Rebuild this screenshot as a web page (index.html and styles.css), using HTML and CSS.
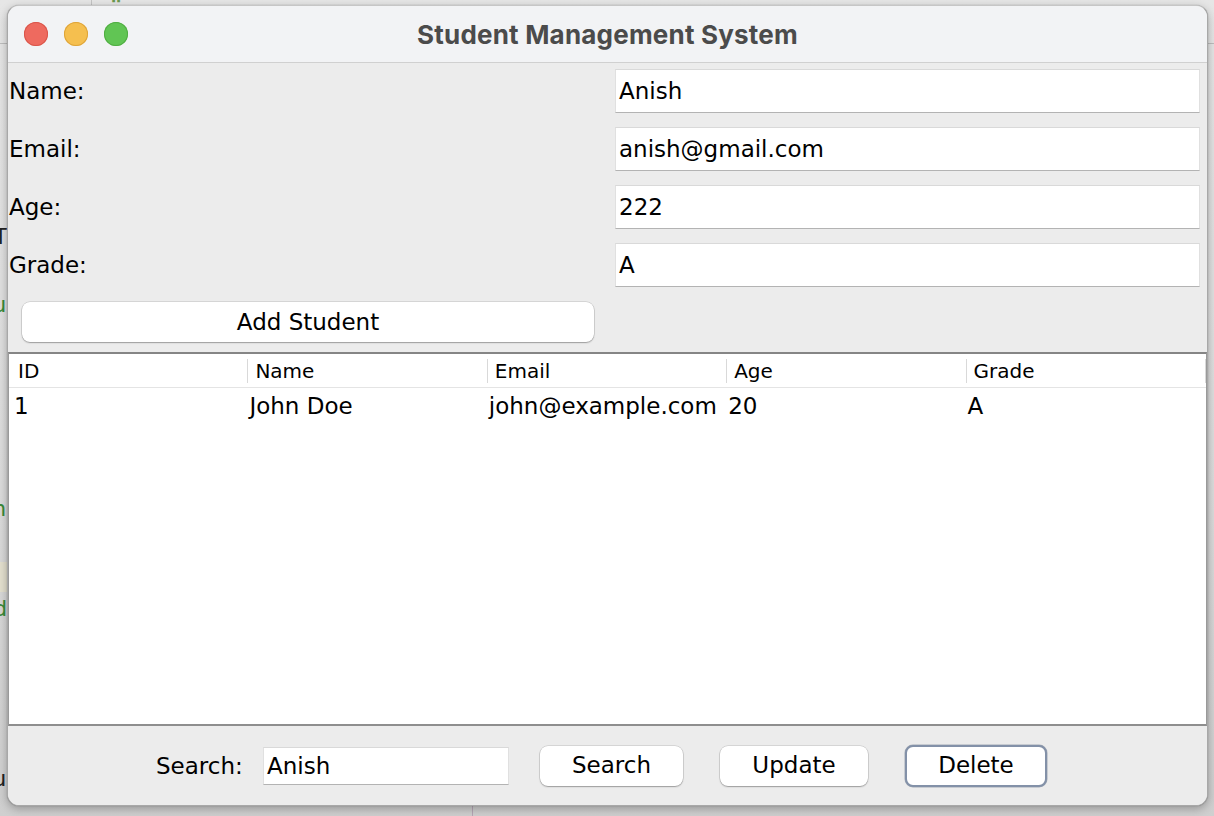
FILE: index.html
```html
<!DOCTYPE html>
<html lang="en">
<head>
<meta charset="utf-8">
<title>Student Management System</title>
<link rel="stylesheet" href="styles.css">
</head>
<body>
<div class="desktop">
  <div class="bg-hline"></div>
  <div class="bg-vline"></div>
  <div class="bg-vline2"></div>
  <div class="bg-hilite"></div>
  <span class="bg-glyph g-quote">“</span>
  <span class="bg-glyph g-t">T</span>
  <span class="bg-glyph g-u green">u</span>
  <span class="bg-glyph g-n green">n</span>
  <span class="bg-glyph g-d green">d</span>
  <span class="bg-glyph g-u2">u</span>

  <div class="window">
    <div class="titlebar">
      <div class="lights">
        <span class="light red"></span>
        <span class="light yellow"></span>
        <span class="light green"></span>
      </div>
      <div class="title">Student Management System</div>
      <div></div>
    </div>

    <div class="form">
      <div class="label">Name:</div>
      <div class="field">Anish</div>
      <div class="label">Email:</div>
      <div class="field">anish@gmail.com</div>
      <div class="label">Age:</div>
      <div class="field">222</div>
      <div class="label">Grade:</div>
      <div class="field">A</div>
      <div class="btn add-btn">Add Student</div>
      <div></div>
    </div>

    <div class="table-pane">
      <div class="thead">
        <div class="th first">ID</div>
        <div class="th">Name</div>
        <div class="th">Email</div>
        <div class="th">Age</div>
        <div class="th">Grade</div>
      </div>
      <div class="tr">
        <div class="td first">1</div>
        <div class="td">John Doe</div>
        <div class="td">john@example.com</div>
        <div class="td">20</div>
        <div class="td">A</div>
      </div>
    </div>

    <div class="bottom">
      <div class="search-label">Search:</div>
      <div class="field search-field">Anish</div>
      <div class="btn small-btn search-btn">Search</div>
      <div class="btn small-btn update-btn">Update</div>
      <div class="btn small-btn delete-btn">Delete</div>
    </div>
  </div>
</div>
</body>
</html>
```

FILE: styles.css
```css
* { box-sizing: border-box; }

html, body {
  margin: 0;
  padding: 0;
  width: 1214px;
  height: 816px;
  overflow: hidden;
  font-family: "DejaVu Sans", "Liberation Sans", sans-serif;
}

.desktop {
  position: relative;
  width: 1214px;
  height: 816px;
  background: linear-gradient(#e6e6e6, #dcdcdc 60%, #cfcfcf);
}

.bg-hline {
  position: absolute;
  left: 0; right: 0; top: 43px;
  height: 1px;
  background: #bdbdbd;
}
.bg-vline {
  position: absolute;
  left: 91px; top: 0;
  width: 1px; height: 10px;
  background: #c4c4c4;
}
.bg-vline2 {
  position: absolute;
  left: 472px; bottom: 0;
  width: 1px; height: 14px;
  background: #b6a7b6;
}
.bg-hilite {
  position: absolute;
  left: 0; top: 562px;
  width: 10px; height: 30px;
  background: #e4e0cf;
}
.bg-glyph {
  position: absolute;
  font-family: "DejaVu Sans Mono", monospace;
  font-size: 22px;
  line-height: 1;
  color: #222;
}
.bg-glyph.green { color: #3a8a3a; }
.g-quote { left: 110px; top: -6px; color: #6a9a50; }
.g-t { left: -6px; top: 226px; }
.g-u { left: -7px; top: 294px; }
.g-n { left: -7px; top: 498px; }
.g-d { left: -6px; top: 598px; }
.g-u2 { left: -7px; top: 768px; }

/* ---------- window ---------- */
.window {
  position: absolute;
  left: 7px;
  top: 5px;
  width: 1201px;
  height: 801px;
  border: 1px solid #a8a8a8;
  border-top-color: #c6c6c6;
  border-radius: 12px;
  overflow: hidden;
  background: #ececec;
  display: flex;
  flex-direction: column;
  box-shadow: 0 3px 10px rgba(0, 0, 0, 0.28), 0 0 1px rgba(0, 0, 0, 0.4);
}

.titlebar {
  flex: 0 0 57px;
  display: grid;
  grid-template-columns: 1fr auto 1fr;
  align-items: center;
  background: #f2f3f5;
  border-bottom: 1px solid #d0d0d0;
}

.lights {
  display: flex;
  gap: 16px;
  padding-left: 16px;
}
.light {
  width: 24px;
  height: 24px;
  border-radius: 50%;
  display: block;
}
.light.red { background: #ee6a5f; box-shadow: inset 0 0 0 1px #d9564b; }
.light.yellow { background: #f5bf4f; box-shadow: inset 0 0 0 1px #dea43a; }
.light.green { background: #61c554; box-shadow: inset 0 0 0 1px #51ad43; }

.title {
  font-family: "Inter", "Liberation Sans", sans-serif;
  font-weight: 700;
  font-size: 26px;
  color: #4b4b4b;
  letter-spacing: 0.2px;
}

/* ---------- form ---------- */
.form {
  display: grid;
  grid-template-columns: 607px 585px;
  grid-template-rows: repeat(4, 44px) 41px;
  row-gap: 14px;
  padding-top: 6px;
}

.label {
  font-size: 23px;
  color: #000;
  padding-left: 1px;
  align-self: center;
  padding-bottom: 1px;
}

.field {
  background: #fff;
  border: 1px solid #e0e0e0;
  border-top-color: #d9d9d9;
  border-bottom-color: #b3b3b3;
  font-size: 23px;
  color: #000;
  padding-left: 3px;
  display: flex;
  align-items: center;
}

.btn {
  background: #fff;
  border-radius: 8px;
  font-size: 23px;
  color: #000;
  display: flex;
  align-items: center;
  justify-content: center;
  box-shadow: 0 0 0 0.5px rgba(0, 0, 0, 0.18), 0 1px 1.5px rgba(0, 0, 0, 0.28);
}

.add-btn {
  margin: 1px 21px 0 14px;
  height: 40px;
}

/* ---------- table ---------- */
.table-pane {
  flex: 1;
  margin-top: 10px;
  background: #fff;
  border: 1px solid #9a9a9a;
  border-top: 2px solid #858585;
  border-bottom: 2px solid #8e8e8e;
}

.thead, .tr {
  display: grid;
  grid-template-columns: repeat(5, 1fr);
}

.thead {
  height: 34px;
  border-bottom: 1px solid #e4e4e4;
}

.th {
  font-size: 20px;
  color: #000;
  padding-left: 7px;
  display: flex;
  align-items: center;
  background-image: linear-gradient(#d9d9d9, #d9d9d9);
  background-size: 1px 24px;
  background-repeat: no-repeat;
  background-position: right center;
}
.th.first { padding-left: 9px; }

.tr { height: 35px; }

.td {
  font-size: 23px;
  color: #000;
  padding-left: 1px;
  display: flex;
  align-items: center;
}
.td.first { padding-left: 5px; }

/* ---------- bottom bar ---------- */
.bottom {
  flex: 0 0 79px;
  display: flex;
  align-items: center;
  padding-left: 148px;
  background: #ececec;
}

.search-label {
  font-size: 23px;
  color: #000;
  width: 89px;
}

.search-field {
  margin-left: 18px;
  width: 246px;
  height: 38px;
}

.small-btn {
  height: 40px;
  padding-bottom: 1px;
}
.search-btn { margin-left: 31px; width: 143px; }
.update-btn { margin-left: 37px; width: 148px; }
.delete-btn {
  margin-left: 37px;
  width: 142px;
  height: 42px;
  border: 2px solid #8391a8;
  box-shadow: 0 0 0 0.5px rgba(90, 105, 130, 0.5);
}
```
